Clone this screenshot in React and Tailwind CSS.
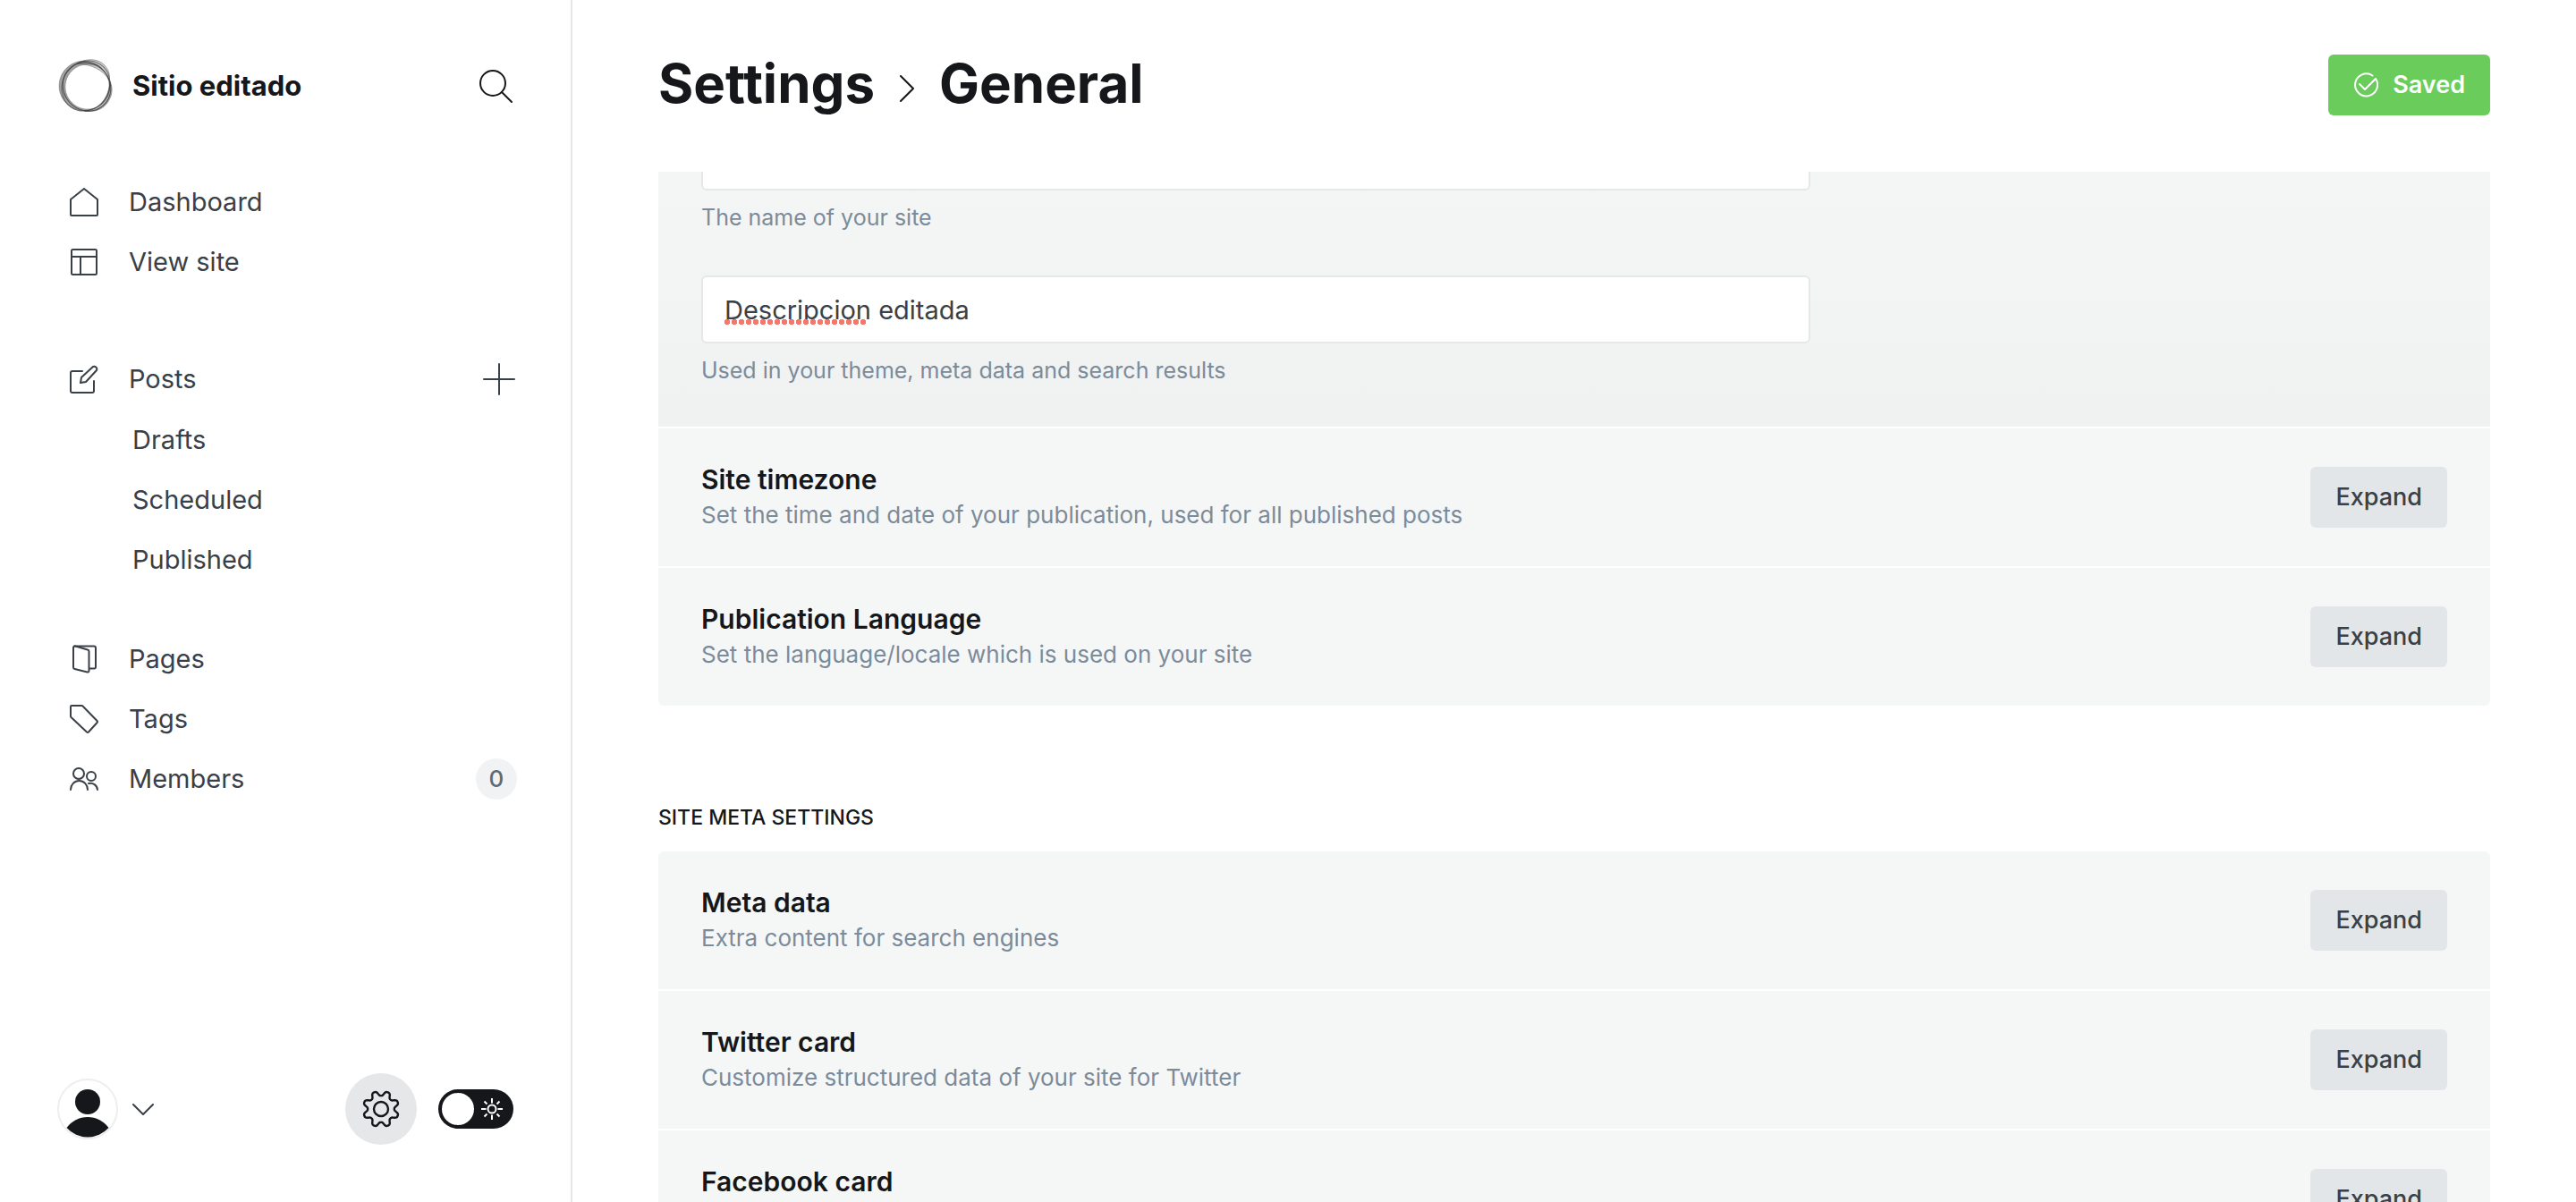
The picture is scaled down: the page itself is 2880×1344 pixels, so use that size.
const stroke = { fill: "none", stroke: "currentColor", strokeWidth: 2, strokeLinecap: "round", strokeLinejoin: "round" };

function Icon({ children, className = "size-8", box = "0 0 32 32" }) {
  return (
    <svg viewBox={box} className={className + " shrink-0"} aria-hidden="true" {...stroke}>
      {children}
    </svg>
  );
}

const icons = {
  home: <path d="M1 13 16 1l15 12v17a1 1 0 0 1-1 1H2a1 1 0 0 1-1-1z" />,
  layout: (
    <>
      <rect x="2" y="2" width="28" height="28" rx="1.500" />
      <path d="M2 10h28M12 10v20" />
    </>
  ),
  edit: (
    <>
      <path d="M14 7H3a2 2 0 0 0-2 2v20a2 2 0 0 0 2 2h22a2 2 0 0 0 2-2V18" />
      <path d="m12 20 1-6L26 2a3 3 0 0 1 4 4L18 19z" />
    </>
  ),
  pages: (
    <>
      <path d="M4 3a2 2 0 0 1 2.500-1.500L20 5.500a2 2 0 0 1 1.500 2V29a1.500 1.500 0 0 1-2 1.500L5.500 27A2 2 0 0 1 4 25z" />
      <path d="M5 1.500h22a2 2 0 0 1 2 2V25a1.500 1.500 0 0 1-1.500 1.500h-5.500" />
    </>
  ),
  tag: <path d="M2 1h11a2 2 0 0 1 1.500.5L30.500 18a1.500 1.500 0 0 1 0 2L21 30.500a1.500 1.500 0 0 1-2 0L1.500 14a2 2 0 0 1-.5-1V2a1 1 0 0 1 1-1z" />,
  users: (
    <>
      <circle cx="10" cy="10" r="6" />
      <path d="M1 28a9.500 10 0 0 1 19 0" />
      <circle cx="24" cy="13" r="5" />
      <path d="M21 21a8 8 0 0 1 10 7" />
    </>
  ),
};

// Eight rounded teeth around a circle, sampled every two degrees.
const gearPath =
  Array.from({ length: 180 }, (_, i) => {
    const angle = (i * Math.PI) / 90;
    const radius = 17.5 + 3 * Math.tanh(-1.4 * Math.cos(8 * angle));
    return (i ? "L" : "M") + (21 + radius * Math.cos(angle)).toFixed(2) + " " + (21 + radius * Math.sin(angle)).toFixed(2);
  }).join("") + "z";

function NavLink({ icon, label, children }) {
  return (
    <li className="flex h-[67px] items-center justify-between">
      <a href="#" className="flex items-center gap-[34px]">
        <Icon>{icons[icon]}</Icon>
        <span>{label}</span>
      </a>
      {children}
    </li>
  );
}

function SubLink({ label }) {
  return (
    <li className="flex h-[67px] items-center pl-[70px]">
      <a href="#">{label}</a>
    </li>
  );
}

function Logo() {
  return (
    <svg viewBox="0 0 64 64" className="size-16" aria-hidden="true" fill="none" stroke="#333">
      <path
        d="M30 4a28 28 0 1 0 .1 0zM34 8a25 25 0 1 1-.1 0z"
        fill="#444"
        fillRule="evenodd"
        fillOpacity=".5"
        strokeOpacity=".3"
      />
      <path d="M22 7C32 1 46 1 53 9s5 14 5 17C52 14 38 8 22 7z" fill="#666" fillOpacity=".3" strokeOpacity=".4" />
      <path d="M59 27c4 9 2 17-3 24S42 62 30 60c16-1 27-12 29-33z" fill="#444" fillOpacity=".4" strokeOpacity=".4" />
      <ellipse cx="33" cy="33" rx="28" ry="26" transform="rotate(50 33 33)" strokeOpacity=".8" />
      <ellipse cx="32" cy="32" rx="29" ry="26" transform="rotate(-55 32 32)" strokeOpacity=".6" />
    </svg>
  );
}

function Sidebar() {
  return (
    <aside className="flex h-full w-[640px] shrink-0 flex-col border-r-2 border-[#e6e7e9] pl-16 pr-[60px] text-[29px] text-[#394047]">
      <div className="mt-16 flex h-16 items-center justify-between text-[#15171a]">
        <div className="flex items-center gap-5">
          <Logo />
          <span className="text-[31px] font-bold">Sitio editado</span>
        </div>
        <button type="button" aria-label="Search" className="mr-1">
          <Icon className="size-10" box="0 0 40 40">
            <circle cx="17" cy="17" r="14" />
            <path d="m27 27 11 11" />
          </Icon>
        </button>
      </div>
      <nav className="mt-16 pl-3.5">
        <ul>
          <NavLink icon="home" label="Dashboard" />
          <NavLink icon="layout" label="View site" />
        </ul>
        <ul className="mt-16">
          <NavLink icon="edit" label="Posts">
            <button type="button" aria-label="New post" className="mr-0.5">
              <Icon className="size-9" box="0 0 36 36">
                <path d="M18 1v34M1 18h34" />
              </Icon>
            </button>
          </NavLink>
        </ul>
        <ul className="mt-px">
          <SubLink label="Drafts" />
          <SubLink label="Scheduled" />
          <SubLink label="Published" />
        </ul>
        <ul className="mt-11">
          <NavLink icon="pages" label="Pages" />
          <NavLink icon="tag" label="Tags" />
          <NavLink icon="users" label="Members">
            <span className="flex size-[46px] items-center justify-center rounded-full bg-[#f1f2f4] text-[26px] font-medium text-[#5d6b78]">0</span>
          </NavLink>
        </ul>
      </nav>
      <div className="mt-auto mb-16 flex h-20 items-center justify-between">
        <button type="button" aria-label="Account" className="flex items-center gap-4">
          <svg viewBox="0 0 68 68" className="size-[68px]" aria-hidden="true">
            <circle cx="34" cy="34" r="33" fill="#fff" stroke="#eceeef" strokeWidth="2" />
            <circle cx="34" cy="26" r="14" fill="#15171a" />
            <path d="M10.500 55a29 29 0 0 1 47 0 31.500 31.500 0 0 1-47 0z" fill="#15171a" />
          </svg>
          <Icon className="size-6" box="0 0 24 24">
            <path d="m1 7 11 11L23 7" />
          </Icon>
        </button>
        <div className="mr-1 flex items-center gap-6">
          <button type="button" aria-label="Settings" className="flex size-20 items-center justify-center rounded-full bg-[#e6e7e9] text-[#15171a]">
            <Icon className="size-[42px]" box="0 0 42 42">
              <path d={gearPath} strokeWidth="2.400" />
              <circle cx="21" cy="21" r="8" strokeWidth="2.400" />
            </Icon>
          </button>
          <button type="button" role="switch" aria-checked="false" aria-label="Dark mode" className="flex h-11 w-[84px] items-center gap-2 rounded-full bg-[#15171a] px-1 text-white">
            <span className="size-9 rounded-full bg-white" />
            <Icon className="size-6" box="0 0 24 24">
              <circle cx="12" cy="12" r="4.500" />
              <path strokeLinecap="butt" d="M12 0v5.500M12 18.500V24M0 12h5.500M18.500 12H24M3.500 3.500l3 3M17.500 17.500l3 3M3.500 20.500l3-3M17.500 6.500l3-3" />
            </Icon>
          </button>
        </div>
      </div>
    </aside>
  );
}

function Row({ title, text }) {
  return (
    <div className="flex h-[154px] items-center justify-between bg-[#f5f7f7] px-12">
      <div>
        <h3 className="text-[30px] leading-10 font-semibold text-[#15171a]">{title}</h3>
        <p className="text-[26px] leading-10 text-[#7c8b9a]">{text}</p>
      </div>
      <button type="button" className="h-[68px] rounded-md bg-[#e2e6e9] px-7 text-[27px] font-medium text-[#394047]">
        Expand
      </button>
    </div>
  );
}

const fieldStyle = "h-[76px] w-full rounded-md border-2 border-[#e6e8e8] bg-white px-6 text-[29px] text-[#394047] outline-none";

function Field({ id, name, value, hint, children }) {
  return (
    <div className="max-w-[1240px]">
      <div className="relative">
        <input id={id} type="text" aria-label={name} aria-describedby={id + "-hint"} defaultValue={value} spellCheck="false" className={fieldStyle} />
        {children}
      </div>
      <p id={id + "-hint"} className="mt-2.5 text-[25px] leading-10 text-[#7c8b9a]">
        {hint}
      </p>
    </div>
  );
}

export default function App() {
  return (
    <div className='flex h-screen overflow-hidden bg-white font-["Inter",sans-serif]'>
      <Sidebar />
      <main className="flex min-w-0 grow flex-col px-24">
        <header className="flex h-48 shrink-0 items-center justify-between pb-0.5">
          <h1 className="flex items-center gap-[27px] pb-1 text-[60px] font-bold text-[#15171a]">
            <a href="#">Settings</a>
            <Icon className="mt-3 h-8 w-[18px]" box="0 0 18 32">
              <path d="m2 2 14 14L2 30" />
            </Icon>
            <span>General</span>
          </h1>
          <button type="button" className="flex h-[68px] items-center gap-4 rounded-md bg-[#6acd5b] px-7 text-[27px] font-semibold text-white">
            <Icon className="size-7" box="0 0 28 28">
              <path d="m7 13 6 6L25 7a12.500 12.500 0 1 1-3.500-3.500" />
            </Icon>
            Saved
          </button>
        </header>
        <div className="min-h-0 grow overflow-hidden">
          <section className="-mt-[55px]">
            <div className="flex flex-col gap-0.5 overflow-hidden rounded-md">
              <div className="flex flex-col gap-[45px] bg-linear-to-b from-[#f5f7f7] to-[#f0f1f1] px-12 pb-[43px]">
                <Field id="site-title" name="Site title" value="Sitio editado" hint="The name of your site" />
                <Field id="site-description" name="Site description" value="Descripcion editada" hint="Used in your theme, meta data and search results">
                  <span className="pointer-events-none absolute top-[49px] left-[25px] h-1.5 w-40 bg-[radial-gradient(circle,#f4776c_3px,transparent_3px)] bg-size-[8px_6px]" />
                </Field>
              </div>
              <Row title="Site timezone" text="Set the time and date of your publication, used for all published posts" />
              <Row title="Publication Language" text="Set the language/locale which is used on your site" />
            </div>
          </section>
          <section>
            <h2 className="mt-[113px] mb-[26px] text-[23px] leading-6 font-medium text-[#15171a] uppercase">Site meta settings</h2>
            <div className="flex flex-col gap-0.5 overflow-hidden rounded-md">
              <Row title="Meta data" text="Extra content for search engines" />
              <Row title="Twitter card" text="Customize structured data of your site for Twitter" />
              <Row title="Facebook card" text="Customize Open Graph data of your site" />
            </div>
          </section>
        </div>
      </main>
    </div>
  );
}
